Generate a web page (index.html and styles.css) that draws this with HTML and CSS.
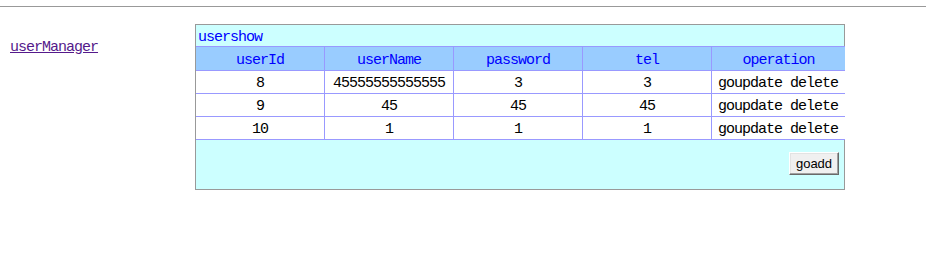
FILE: index.html
```html
<!DOCTYPE html>
<html>
<head>
<meta charset="utf-8">
<link rel="stylesheet" href="styles.css">
</head>
<body>
<div class="topbar"></div>
<div class="layout">
  <div class="side"><a class="navlink" href="#">userManager</a></div>
  <div class="main">
    <div class="box">
      <div class="title">usershow</div>
      <table class="grid">
        <tr class="head">
          <th class="c1">userId</th><th class="c">userName</th><th class="c">password</th><th class="c">tel</th><th class="clast">operation</th>
        </tr>
        <tr>
          <td class="c1">8</td><td class="c">45555555555555</td><td class="c">3</td><td class="c">3</td><td class="clast op">goupdate delete</td>
        </tr>
        <tr>
          <td class="c1">9</td><td class="c">45</td><td class="c">45</td><td class="c">45</td><td class="clast op">goupdate delete</td>
        </tr>
        <tr>
          <td class="c1">10</td><td class="c">1</td><td class="c">1</td><td class="c">1</td><td class="clast op">goupdate delete</td>
        </tr>
      </table>
      <div class="foot"><button class="btn">goadd</button></div>
    </div>
  </div>
</div>
</body>
</html>
```
FILE: styles.css
```css
html, body { margin: 0; padding: 0; background: #fff; }
body { font-family: "Liberation Mono", "DejaVu Sans Mono", monospace; font-size: 15px; letter-spacing: -1px; }
.topbar { height: 6px; border-bottom: 1px solid #999; }
.layout { display: flex; }
.side { width: 185px; padding-left: 10px; padding-top: 32px; }
.navlink { color: #551a8b; text-decoration: underline; line-height: 16px; }
.main { padding-top: 17px; }
.box { width: 649px; border: 1px solid #999; border-right: none; }
.title { height: 21px; line-height: 16px; padding-top: 5px; background: #ccffff; color: #0000ff; padding-left: 2px; border-right: 1px solid #999; box-sizing: border-box; }
.grid { border-collapse: separate; border-spacing: 0; table-layout: fixed; width: 649px; }
.grid th, .grid td { padding: 0; text-align: center; border-bottom: 1px solid #9999ff; font-weight: normal; white-space: nowrap; line-height: 16px; }
.grid th { background: #99ccff; color: #0000ff; height: 19px; padding-top: 4px; border-top: 1px solid #9999ff; }
.grid td { background: #fff; color: #000; height: 19px; padding-top: 3px; }
.c1 { width: 128px; }
.c { width: 128px; border-left: 1px solid #9999ff; }
.clast { width: 133px; border-left: 1px solid #9999ff; }
.grid td.op { text-align: left; padding-left: 6px; }
.foot { height: 49px; background: #ccffff; border-right: 1px solid #999; box-sizing: border-box; display: flex; justify-content: flex-end; align-items: flex-start; padding: 12px 5px 0 0; }
.btn { width: 50px; height: 23px; padding: 0; font-family: "Liberation Sans", Arial, sans-serif; font-size: 13px; letter-spacing: 0; color: #000; background: #f0f0f0; border: 1px solid; border-color: #fff #696969 #696969 #fff; box-shadow: inset -1px -1px 0 #a0a0a0, inset 1px 1px 0 #e3e3e3; }
```
